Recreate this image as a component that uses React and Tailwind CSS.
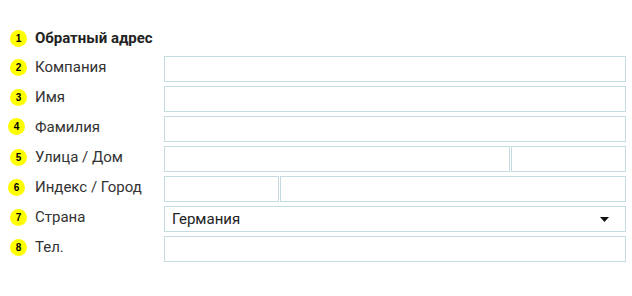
import React from "react";

function Badge({ n, shift = "" }) {
  return (
    <span
      className={`flex h-[17px] w-[17px] shrink-0 items-center justify-center rounded-full bg-[#ffff00] text-[10px] font-bold text-black ${shift}`}
      style={{ fontFamily: "'Liberation Sans', Arial, sans-serif" }}
    >
      {n}
    </span>
  );
}

function Label({ n, text, shift, bold }) {
  return (
    <div className="flex w-[154px] shrink-0 items-center pb-[3px]">
      <Badge n={n} shift={shift} />
      <span
        className={`ml-[8px] text-[15px] ${bold ? "font-bold text-[#222]" : "text-[#333]"}`}
      >
        {text}
      </span>
    </div>
  );
}

function Input({ className = "" }) {
  return (
    <input
      type="text"
      className={`h-[26px] min-w-0 border border-[#c5dbe2] bg-white px-2 text-[14px] outline-none ${className}`}
    />
  );
}

function Row({ n, label, shift, children }) {
  return (
    <div className="flex h-[26px] items-center">
      <Label n={n} text={label} shift={shift} />
      <div className="flex min-w-0 flex-1 gap-[1px]">{children}</div>
    </div>
  );
}

export default function App() {
  return (
    <div
      className="min-h-[296px] bg-white pl-[10px] pr-[6px] pt-[30px]"
      style={{ fontFamily: "Roboto, 'Noto Sans', sans-serif" }}
    >
      <div className="mb-[6px] flex h-[20px] items-center">
        <Label n="1" text="Обратный адрес" bold />
      </div>
      <div className="flex flex-col gap-[4px]">
        <Row n="2" label="Компания">
          <Input className="w-0 flex-1" />
        </Row>
        <Row n="3" label="Имя">
          <Input className="w-0 flex-1" />
        </Row>
        <Row n="4" label="Фамилия" shift="-ml-[2px] -mt-[3px] mr-[2px]">
          <Input className="w-0 flex-1" />
        </Row>
        <Row n="5" label="Улица / Дом">
          <Input className="w-[346px] shrink-0" />
          <Input className="w-0 flex-1" />
        </Row>
        <Row n="6" label="Индекс / Город" shift="-ml-[2px] mr-[2px]">
          <Input className="w-[115px] shrink-0" />
          <Input className="w-0 flex-1" />
        </Row>
        <Row n="7" label="Страна">
          <div className="flex h-[26px] min-w-0 flex-1 items-center justify-between border border-[#c5dbe2] bg-white pl-[7px] pr-[16px] text-[15px] text-[#222]">
            <span>Германия</span>
            <svg width="9" height="5" viewBox="0 0 9 5">
              <path d="M0 0 H9 L4.5 5 Z" fill="#111" />
            </svg>
          </div>
        </Row>
        <Row n="8" label="Тел.">
          <Input className="w-0 flex-1" />
        </Row>
      </div>
    </div>
  );
}
